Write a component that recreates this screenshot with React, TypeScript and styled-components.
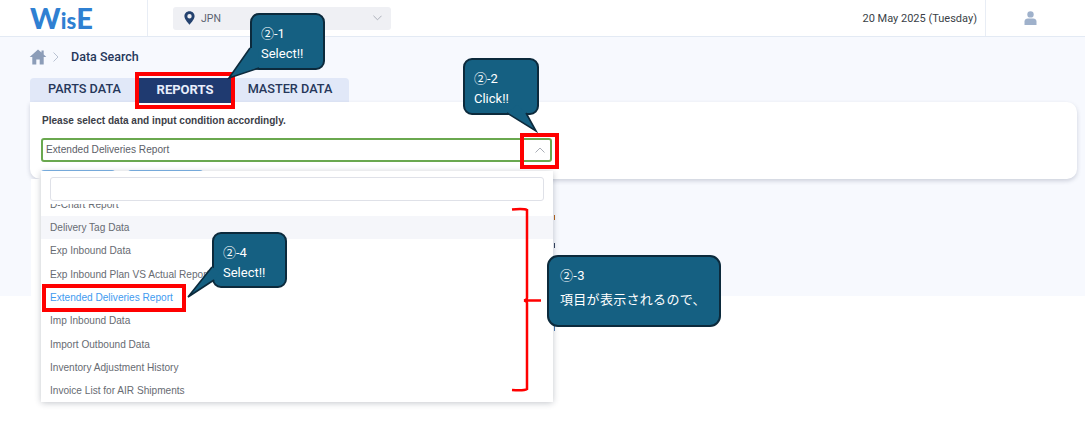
import React from "react";
import styled, { createGlobalStyle } from "styled-components";

const Global = createGlobalStyle`
  html, body { margin: 0; padding: 0; background: #fff; }
  body { font-family: "Roboto", "Liberation Sans", sans-serif; overflow: hidden; }
  * { box-sizing: border-box; }
`;

const Page = styled.div`
  position: relative;
  width: 1085px;
  height: 424px;
  overflow: hidden;
  background: #fff;
`;

const Header = styled.header`
  display: flex;
  align-items: center;
  height: 37px;
  background: #fff;
  border-bottom: 1px solid #e3eaf4;
`;
const LogoCell = styled.div`
  width: 148px;
  height: 36px;
  padding-left: 30px;
  padding-bottom: 0;
  display: flex;
  align-items: center;
  border-right: 1px solid #e8edf5;
`;
const Logo = styled.div`
  display: block;
  white-space: nowrap;
  font-family: "Lato", "Open Sans", sans-serif;
  font-weight: 900;
  color: #2f80d2;
  line-height: 36px;
  height: 36px;
`;
const LogoBig = styled.span`
  font-size: 29px;
`;
const LogoSmall = styled.span`
  font-size: 22px;
`;
const Location = styled.div`
  margin-left: 25px;
  width: 218px;
  height: 23px;
  background: #eff0f4;
  border-radius: 3px;
  display: flex;
  align-items: center;
  padding: 0 9px 0 11px;
  gap: 6px;
  font-size: 10.5px;
  color: #5b6270;
`;
const Grow = styled.div`
  flex: 1;
`;
const DateText = styled.div`
  font-size: 11px;
  color: #3a3f47;
  margin-right: 8px;
`;
const UserCell = styled.div`
  width: 100px;
  height: 36px;
  border-left: 1px solid #e8edf5;
  display: flex;
  align-items: center;
  padding-left: 38px;
`;

const Main = styled.main`
  height: 259px;
  background: #f7f9fe;
  padding: 0 8px 0 30px;
`;
const Crumbs = styled.div`
  height: 41px;
  display: flex;
  align-items: center;
  padding-bottom: 2px;
  margin-left: -1px;
  font-size: 12.5px;
  font-weight: 500;
  color: #26375a;
`;
const CrumbSep = styled.span`
  margin: 0 12px 0 6px;
  display: flex;
`;
const Tabs = styled.div`
  display: flex;
  width: 319px;
  height: 24px;
  background: #e1e8f8;
  border-radius: 4px 4px 0 0;
`;
const Tab = styled.div<{ $active?: boolean; $w: number }>`
  width: ${(p) => p.$w}px;
  height: ${(p) => (p.$active ? 25 : 24)}px;
  display: flex;
  align-items: center;
  justify-content: center;
  padding-bottom: 3px;
  font-size: ${(p) => (p.$active ? 13 : 12.7)}px;
  font-weight: ${(p) => (p.$active ? 700 : 500)};
  color: ${(p) => (p.$active ? "#e8eefc" : "#26375a")};
  background: ${(p) => (p.$active ? "#1f3a70" : "transparent")};
`;
const Card = styled.section`
  height: 77px;
  background: #fff;
  border-radius: 0 10px 10px 10px;
  box-shadow: 0 2px 4px rgba(60, 70, 100, 0.22);
  padding: 13px 12px 0 11px;
`;
const CardTitle = styled.div`
  font-family: "Liberation Sans", Arial, sans-serif;
  font-size: 10.05px;
  font-weight: 700;
  color: #3c4048;
  height: 23px;
  padding-left: 1px;
`;
const SelectBox = styled.div`
  width: 511px;
  height: 24px;
  border: 2px solid #6aa84f;
  border-radius: 3px;
  display: flex;
  align-items: center;
  justify-content: space-between;
  padding: 0 5px 1px 3px;
  font-family: "Liberation Sans", Arial, sans-serif;
  font-size: 10.15px;
  color: #5c6068;
`;
const LowerPane = styled.div`
  width: 522px;
  height: 117px;
  margin-left: 1px;
  background: #fff;
`;

const Pill = styled.div<{ $x: number; $w: number }>`
  position: absolute;
  left: ${(p) => p.$x}px;
  top: 170px;
  width: ${(p) => p.$w}px;
  height: 6px;
  background: #7eb6ea;
  border-radius: 3px 3px 0 0;
`;
const Dropdown = styled.div`
  position: absolute;
  left: 41px;
  top: 171px;
  width: 512px;
  height: 231px;
  background: #fff;
  border-radius: 3px;
  box-shadow: 0 1px 6px rgba(40, 50, 70, 0.28);
  display: flex;
  flex-direction: column;
`;
const Search = styled.div`
  flex: none;
  position: relative;
  z-index: 1;
  background: #fff;
  height: 33px;
  padding: 6px 9px 3px 9px;
`;
const SearchBox = styled.div`
  height: 24px;
  width: 494px;
  border: 1px solid #dfe1e8;
  border-radius: 3px;
  background: #fff;
`;
const List = styled.div`
  margin-top: -11.6px;
  display: flex;
  flex-direction: column;
`;
const Row = styled.div<{ $hover?: boolean; $selected?: boolean }>`
  flex: none;
  height: 23.33px;
  display: flex;
  align-items: center;
  padding-left: 9px;
  font-family: "Liberation Sans", Arial, sans-serif;
  font-size: 10.1px;
  color: ${(p) => (p.$selected ? "#3f9bf0" : "#676b72")};
  background: ${(p) => (p.$hover ? "#f5f6fa" : "#fff")};
`;
const Caret = styled.div`
  position: absolute;
  left: 287px;
  top: 168px;
  width: 7px;
  height: 7px;
  background: #fff;
  transform: rotate(45deg);
`;
const Mark = styled.div<{ $y: number; $c: string }>`
  position: absolute;
  left: 554px;
  top: ${(p) => p.$y}px;
  width: 1px;
  height: 5px;
  background: ${(p) => p.$c};
`;

const RedBox = styled.div<{ $x: number; $y: number; $w: number; $h: number; $b?: number }>`
  position: absolute;
  left: ${(p) => p.$x}px;
  top: ${(p) => p.$y}px;
  width: ${(p) => p.$w}px;
  height: ${(p) => p.$h}px;
  border: ${(p) => p.$b ?? 4}px solid #ff0000;
`;
const Callout = styled.div<{ $x: number; $y: number; $w: number; $h: number; $r?: number; $lh?: number; $pt?: number; $pl?: number; $ls?: number }>`
  position: absolute;
  left: ${(p) => p.$x}px;
  top: ${(p) => p.$y}px;
  width: ${(p) => p.$w}px;
  height: ${(p) => p.$h}px;
  background: #156082;
  border: 2px solid #0c2a3c;
  border-radius: ${(p) => p.$r ?? 9}px;
  padding: ${(p) => p.$pt ?? 9}px 0 0 ${(p) => p.$pl ?? 9}px;
  color: #fff;
  font-family: "Roboto", "Noto Sans CJK JP", sans-serif;
  font-size: 13px;
  letter-spacing: ${(p) => p.$ls ?? 0}px;
  line-height: ${(p) => p.$lh ?? 20}px;
`;
const CalloutLine = styled.div`
  white-space: nowrap;
`;
const Tail = styled.svg`
  position: absolute;
  left: 0;
  top: 0;
  overflow: visible;
`;
const Bracket = styled.svg`
  position: absolute;
  left: 510px;
  top: 206px;
`;

const HomeIcon = () => (
  <svg width="18" height="16" viewBox="0 0 17 16">
    <path d="M8.5 0.5 L0.2 8 H2.8 V15.5 H6.8 V10.5 H10.2 V15.5 H14.2 V8 H16.8 L14.2 5.6 V1.5 H12 V3.5 Z" fill="#8c9db8" />
  </svg>
);
const Pin = () => (
  <svg width="11" height="14" viewBox="0 0 11 14">
    <path
      fillRule="evenodd"
      d="M5.5 0.3 C2.5 0.3 0.4 2.5 0.4 5.3 C0.4 8.6 5.5 13.7 5.5 13.7 C5.5 13.7 10.6 8.6 10.6 5.3 C10.6 2.5 8.5 0.3 5.5 0.3 Z M5.5 3.1 A2.2 2.2 0 1 1 5.5 7.5 A2.2 2.2 0 1 1 5.5 3.1 Z"
      fill="#24426f"
    />
  </svg>
);
const Chevron = ({ up, color, w = 9 }: { up?: boolean; color: string; w?: number }) => (
  <svg width={w} height="6" viewBox="0 0 10 6">
    <path d={up ? "M0.5 5.5 L5 1 L9.5 5.5" : "M0.5 0.5 L5 5 L9.5 0.5"} fill="none" stroke={color} strokeWidth="1" />
  </svg>
);
const UserIcon = () => (
  <svg width="13" height="14" viewBox="0 0 13 14">
    <circle cx="6.5" cy="3.4" r="3.2" fill="#9fb1cb" />
    <path d="M0.5 14 V10.4 C0.5 8.4 2 7.4 3.8 7.4 H9.2 C11 7.4 12.5 8.4 12.5 10.4 V14 Z" fill="#9fb1cb" />
  </svg>
);
const TailShape = ({ a, tip, b, inner }: { a: string; tip: string; b: string; inner: string }) => (
  <Tail width="1" height="1">
    <polygon points={`${a} ${tip} ${b} ${inner}`} fill="#156082" />
    <polyline points={`${a} ${tip} ${b}`} fill="none" stroke="#0c2a3c" strokeWidth="1.6" strokeLinejoin="miter" />
  </Tail>
);

const rows = [
  "D-Chart Report",
  "Delivery Tag Data",
  "Exp Inbound Data",
  "Exp Inbound Plan VS Actual Report",
  "Extended Deliveries Report",
  "Imp Inbound Data",
  "Import Outbound Data",
  "Inventory Adjustment History",
  "Invoice List for AIR Shipments",
];

export default function App() {
  return (
    <Page>
      <Global />
      <Header>
        <LogoCell>
          <Logo>
            <LogoBig>W</LogoBig>
            <LogoSmall>is</LogoSmall>
            <LogoBig>E</LogoBig>
          </Logo>
        </LogoCell>
        <Location>
          <Pin />
          <span>JPN</span>
          <Grow />
          <Chevron color="#a5a9b3" />
        </Location>
        <Grow />
        <DateText>20 May 2025 (Tuesday)</DateText>
        <UserCell>
          <UserIcon />
        </UserCell>
      </Header>
      <Main>
        <Crumbs>
          <HomeIcon />
          <CrumbSep>
            <svg width="6" height="10" viewBox="0 0 6 10">
              <path d="M0.5 0.5 L5 5 L0.5 9.5" fill="none" stroke="#b9c2d2" strokeWidth="1" />
            </svg>
          </CrumbSep>
          <span>Data Search</span>
        </Crumbs>
        <Tabs>
          <Tab $w={109}>PARTS DATA</Tab>
          <Tab $w={92} $active>REPORTS</Tab>
          <Tab $w={118}>MASTER DATA</Tab>
        </Tabs>
        <Card>
          <CardTitle>Please select data and input condition accordingly.</CardTitle>
          <SelectBox>
            <span>Extended Deliveries Report</span>
            <Chevron up color="#a9adb5" w={10} />
          </SelectBox>
        </Card>
        <LowerPane />
      </Main>

      <Pill $x={41} $w={74} />
      <Pill $x={128} $w={75} />
      <Mark $y={215} $c="#b5651d" />
      <Mark $y={243} $c="#33415c" />
      <Mark $y={326} $c="#4a78b0" />
      <Caret />
      <Dropdown>
        <Search>
          <SearchBox />
        </Search>
        <List>
          {rows.map((r, i) => (
            <Row key={r} $hover={i === 1} $selected={i === 4}>
              {r}
            </Row>
          ))}
        </List>
      </Dropdown>

      <RedBox $x={135} $y={72} $w={100} $h={37} />
      <RedBox $x={520} $y={133} $w={39} $h={36} />
      <RedBox $x={42} $y={284} $w={144} $h={28} />

      <Bracket width="34" height="188" viewBox="0 0 34 188">
        <path
          d="M2 3.5 C8 3 14 2.5 17 4 V92 Q17 94 14 94.5 H31 M14 94.5 Q17 95 17 97 V183 C14 185 8 184.5 2 184"
          fill="none"
          stroke="#ff0000"
          strokeWidth="2.5"
        />
      </Bracket>

      <Callout $x={250} $y={13} $w={75} $h={57}>
        <TailShape a="-2,33" tip="-23,63" b="7,53" inner="6,33" />
        <CalloutLine>②-1</CalloutLine>
        <CalloutLine>Select!!</CalloutLine>
      </Callout>

      <Callout $x={463} $y={58} $w={76} $h={57}>
        <TailShape a="42,53" tip="71,71" b="61,53" inner="52,45" />
        <CalloutLine>②-2</CalloutLine>
        <CalloutLine>Click!!</CalloutLine>
      </Callout>

      <Callout $x={547} $y={255} $w={174} $h={72} $r={11} $lh={24} $pt={7} $pl={11} $ls={0.3}>
        <CalloutLine>②-3</CalloutLine>
        <CalloutLine>項目が表示されるので、</CalloutLine>
      </Callout>

      <Callout $x={212} $y={232} $w={75} $h={56}>
        <TailShape a="-2,33" tip="-26,63" b="0,46" inner="6,38" />
        <CalloutLine>②-4</CalloutLine>
        <CalloutLine>Select!!</CalloutLine>
      </Callout>
    </Page>
  );
}
